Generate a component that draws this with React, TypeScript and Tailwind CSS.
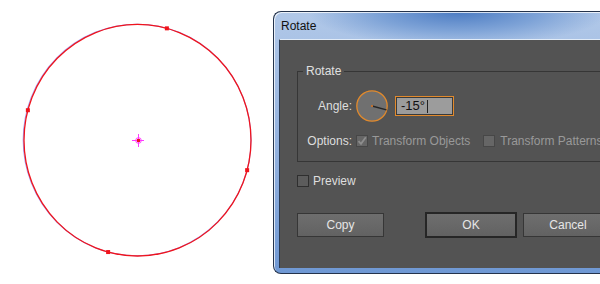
import React from "react";

const font = "font-['Liberation_Sans',Arial,sans-serif]";

const anchors = [-75, 195, 15, 105].map((deg) => {
  const a = (deg * Math.PI) / 180;
  return { x: 137.5 + 113.5 * Math.cos(a), y: 140.2 + 115.8 * Math.sin(a) };
});

const Artboard: React.FC = () => (
  <svg width="273" height="284" viewBox="0 0 273 284" className="shrink-0">
    {/* selected path (blue) under the rotated preview (red) */}
    <ellipse cx="137.1" cy="140" rx="113.9" ry="115.8" fill="none" stroke="#4646f0" strokeWidth="1.1" opacity="0.5" />
    <ellipse cx="137.5" cy="140.2" rx="113.5" ry="115.8" fill="none" stroke="#f0141c" strokeWidth="1.3" />
    {anchors.map((p, i) => (
      <rect key={i} x={p.x - 2} y={p.y - 2} width="4" height="4" fill="#f0141c" />
    ))}
    {/* rotation origin */}
    <g stroke="#ff3cff" strokeWidth="1">
      <line x1="132" y1="140.5" x2="144" y2="140.5" />
      <line x1="138.5" y1="134" x2="138.5" y2="147" />
      <circle cx="138.5" cy="140.5" r="2.8" fill="none" />
    </g>
    <rect x="137" y="139" width="3" height="3" fill="#f0141c" />
  </svg>
);

const Checkbox: React.FC<{ checked?: boolean; disabled?: boolean }> = ({ checked, disabled }) => (
  <span
    className={`flex h-[12px] w-[12px] shrink-0 items-center justify-center border ${
      disabled ? "border-[#474747] bg-[#666666]" : "border-[#2f2f2f] bg-[#5c5c5c]"
    }`}
  >
    {checked && (
      <svg width="10" height="10" viewBox="0 0 10 10">
        <path d="M1.5 5.2 L4 7.8 L8.8 1.2" fill="none" stroke="#8e8e8e" strokeWidth="1.8" />
      </svg>
    )}
  </span>
);

const Button: React.FC<{ label: string; primary?: boolean }> = ({ label, primary }) => (
  <button
    className={`flex items-center justify-center bg-gradient-to-b from-[#6e6e6e] to-[#626262] text-[12px] text-[#e6e6e6] ${
      primary ? "h-[26px] w-[92px] border-2 border-[#262626]" : "h-[24px] w-[90px] border border-[#363636]"
    }`}
  >
    {label}
  </button>
);

const Dial: React.FC = () => (
  <svg width="32" height="32" viewBox="0 0 32 32" className="shrink-0">
    <circle cx="16" cy="16" r="15.2" fill="#707070" stroke="#e28a2c" strokeWidth="1.3" />
    <line x1="16" y1="16" x2="30.5" y2="19.9" stroke="#262626" strokeWidth="1.3" />
    <rect x="15" y="15" width="2" height="2" fill="#c0702e" />
  </svg>
);

const RotateDialog: React.FC = () => (
  <div
    className={`${font} mt-[11px] flex h-[263px] w-[340px] shrink-0 flex-col rounded-l-[8px] border border-r-0 border-[#24334c] bg-[radial-gradient(ellipse_150px_34px_at_184px_0px,#4c7cc3_0%,#7ea3d7_55%,transparent_100%),linear-gradient(to_bottom,#b1c8e8,#8eaedd_60%,#6f98d4)] shadow-[inset_1px_1px_0_rgba(255,255,255,0.75)]`}
  >
    {/* Title bar */}
    <div className="flex h-[27px] shrink-0 items-center pl-[7px] pt-[1px] text-[12px] text-[#111]">Rotate</div>

    {/* Dialog body */}
    <div className="mb-[5px] ml-[5px] flex-1 border-l border-t border-l-[#2c3b52] border-t-[#e1ebf7] bg-[#535353] pl-[17px] pt-[24px] text-[12px] leading-[14px] text-[#dedede]">
      <fieldset className="w-[320px] border border-[#363636] px-[5px] pb-[13px] pt-[12px]">
        <legend className="px-[3px] text-[#e0e0e0]">Rotate</legend>
        <div className="grid grid-cols-[49px_1fr] items-center gap-x-[4px] gap-y-[12px]">
          <span className="text-right">Angle:</span>
          <div className="flex items-center gap-[7px]">
            <Dial />
            <div className="flex h-[20px] w-[59px] border border-[#e28a2c]">
              <div className="flex flex-1 items-center border border-[#3a3a3a] bg-[#9c9c9c] pl-[4px] text-[13px] text-[#111]">
                -15°
                <span className="ml-[2px] h-[13px] w-px bg-[#222]" />
              </div>
            </div>
          </div>

          <span className="text-right">Options:</span>
          <div className="flex items-center whitespace-nowrap text-[#999999]">
            <Checkbox checked disabled />
            <span className="ml-[4px]">Transform Objects</span>
            <span className="ml-[13px]">
              <Checkbox disabled />
            </span>
            <span className="ml-[5px]">Transform Patterns</span>
          </div>
        </div>
      </fieldset>

      <div className="mt-[12px] flex items-center">
        <Checkbox />
        <span className="ml-[4px]">Preview</span>
      </div>

      <div className="mt-[24px] flex items-center">
        <Button label="Copy" />
        <div className="ml-[41px]">
          <Button label="OK" primary />
        </div>
        <div className="ml-[6px]">
          <Button label="Cancel" />
        </div>
      </div>
    </div>
  </div>
);

export default function App() {
  return (
    <div className="flex h-[284px] w-[600px] overflow-hidden bg-white">
      <Artboard />
      <RotateDialog />
    </div>
  );
}
